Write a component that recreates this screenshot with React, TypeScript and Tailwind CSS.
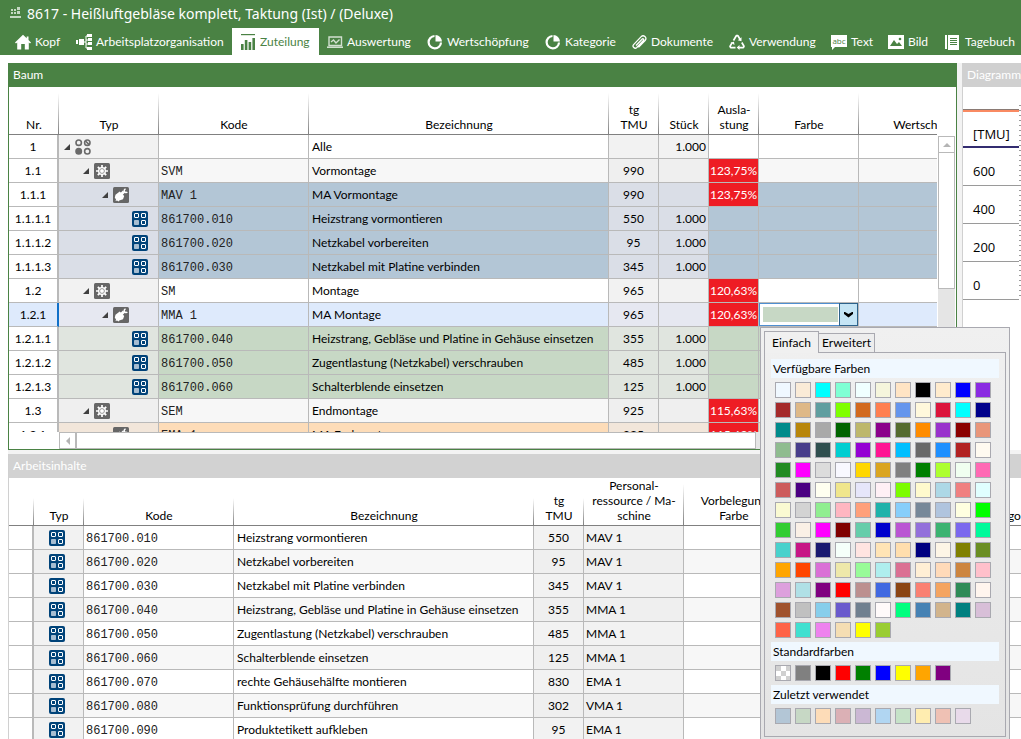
import React, { useState } from 'react';
import clsx from 'clsx';

interface TabItem {
  label: string;
  width: string;
  icon: React.ReactNode;
}

type NodeKind = 'root' | 'station' | 'worker' | 'task';
type Tone = 'plain' | 'alt' | 'blue' | 'green' | 'selected' | 'orange';

interface TreeRow {
  nr: string;
  kind: NodeKind;
  code: string;
  name: string;
  tmu?: string;
  pieces?: string;
  load?: string;
  tone: Tone;
}

interface WorkItem {
  code: string;
  name: string;
  tmu: string;
  resource: string;
}

/* ---------- Icons ---------- */

const TabIcon = ({ children }: { children: React.ReactNode }) => (
  <svg viewBox="0 0 16 16" className="w-4 h-4 shrink-0" fill="currentColor" aria-hidden="true">
    {children}
  </svg>
);

const PieIcon = () => (
  <TabIcon>
    <path d="M7.500 2A6.200 6.200 0 1 0 14 8.500" fill="none" stroke="currentColor" strokeWidth="2.200" />
    <path d="M8.500 1A6.800 6.800 0 0 1 15 7.500H8.500z" />
  </TabIcon>
);

const AppIcon = () => (
  <svg viewBox="0 0 11 12" className="w-[11px] h-3 shrink-0 -mt-1" fill="#c4d8c2" aria-hidden="true">
    <rect x="1" y="3" width="2" height="2" />
    <rect x="4" y="3" width="2" height="2" />
    <rect x="7" y="1" width="3" height="3" />
    <rect x="1" y="6" width="2" height="2" />
    <rect x="4" y="6" width="2" height="2" />
    <rect x="7" y="5" width="3" height="3" />
    <rect x="0" y="10" width="11" height="2" />
  </svg>
);

const RootIcon = () => (
  <svg viewBox="0 0 16 16" className="w-4 h-4 shrink-0" fill="none" stroke="#6a6a6a" strokeWidth="1.6">
    <circle cx="3.7" cy="3.7" r="2.7" />
    <circle cx="12.3" cy="3.7" r="2.7" />
    <path d="M10.5 2l3.6 3.6" />
    <circle cx="3.7" cy="12.3" r="2.7" fill="#6a6a6a" />
    <circle cx="12.3" cy="12.3" r="2.7" />
  </svg>
);

const StationIcon = () => (
  <svg viewBox="0 0 16 16" className="w-4 h-4 shrink-0">
    <rect width="16" height="16" rx="1.5" fill="#666" />
    <g stroke="#fff" strokeWidth="1.7">
      <path d="M8 2v12M2 8h12M3.8 3.8l8.4 8.4M12.2 3.8l-8.4 8.4" />
    </g>
    <circle cx="8" cy="8" r="4" fill="#fff" />
    <circle cx="8" cy="8" r="2.4" fill="none" stroke="#8a8a8a" strokeWidth="0.9" />
  </svg>
);

const WorkerIcon = () => (
  <svg viewBox="0 0 16 16" className="w-4 h-4 shrink-0">
    <rect width="16" height="16" rx="1.5" fill="#666" />
    <path d="M1.800 10.800l.7-3 4.200-3.300 4.500 4.500-1.200 3.200-3.700 1.300-.8 1-1.400-.9-1.500.3.400-1.600z" fill="#fff" />
    <path d="M8 7.500l3-3" stroke="#fff" strokeWidth="3" />
    <path d="M12.600 1.900a1.800 1.800 0 1 0 1.700 3" fill="none" stroke="#fff" strokeWidth="1.500" />
  </svg>
);

const TaskIcon = () => (
  <svg viewBox="0 0 16 16" className="w-4 h-4 shrink-0">
    <rect width="16" height="16" rx="2" fill="#004379" />
    <g fill="none" stroke="#fff" strokeWidth="1">
      <rect x="2.5" y="2.5" width="4" height="4" rx="0.5" />
      <rect x="9.5" y="2.5" width="4" height="4" rx="0.5" />
      <rect x="9.5" y="9.5" width="4" height="4" rx="0.5" />
    </g>
    <rect x="2" y="9" width="5" height="5" rx="0.8" fill="#a6bdd1" />
  </svg>
);

const nodeIcons: Record<NodeKind, React.ReactNode> = {
  root: <RootIcon />,
  station: <StationIcon />,
  worker: <WorkerIcon />,
  task: <TaskIcon />
};

/* ---------- Data ---------- */

const tabs: TabItem[] = [
  {
    label: 'Kopf',
    width: 'w-[61px]',
    icon: (
      <TabIcon>
        <path d="M8 .8L0 8.4l1 1.1 1.2-1V15.5h4V10h3.6v5.5h4V8.5l1.2 1 1-1.1-2.5-2.4V2.5h-1.8v1.8z" />
      </TabIcon>
    )
  },
  {
    label: 'Arbeitsplatzorganisation',
    width: 'w-[164px]',
    icon: (
      <TabIcon>
        <rect x="0" y="6" width="2" height="4" />
        <rect x="3" y="5" width="5" height="6" />
        <path d="M8 8h2M12 2h-2v12h2M10 6h2M10 10h2" fill="none" stroke="currentColor" />
        <rect x="11" y="0" width="5" height="3" />
        <rect x="12" y="4" width="4" height="3" />
        <rect x="12" y="8" width="4" height="3" />
        <rect x="11" y="13" width="5" height="3" />
      </TabIcon>
    )
  },
  {
    label: 'Zuteilung',
    width: 'w-[87px]',
    icon: (
      <TabIcon>
        <rect x="1" y="0" width="14" height="1.2" />
        <rect x="1" y="10" width="2.6" height="6" />
        <rect x="4.8" y="6" width="2.6" height="10" />
        <rect x="8.6" y="8" width="2.6" height="8" />
        <rect x="12.4" y="4" width="2.6" height="12" />
      </TabIcon>
    )
  },
  {
    label: 'Auswertung',
    width: 'w-[100px]',
    icon: (
      <TabIcon>
        <g fill="none" stroke="currentColor" opacity="0.75">
          <path d="M2 11.500V3h12.500v8.500z" strokeWidth="1.400" />
          <path d="M4 8l2.500-2 2.500 3 3.500-3.500" strokeWidth="1.400" />
          <path d="M0 13.200h16" strokeWidth="1.600" />
        </g>
      </TabIcon>
    )
  },
  { label: 'Wertschöpfung', width: 'w-[118px]', icon: <PieIcon /> },
  { label: 'Kategorie', width: 'w-[86px]', icon: <PieIcon /> },
  {
    label: 'Dokumente',
    width: 'w-[98px]',
    icon: (
      <TabIcon>
        <path
          d="M5 11.500l6-6.300c1-1 2.300.2 1.400 1.300l-6.600 7c-2 2-5-.8-3.200-2.900l7.600-8c2.300-2.300 6.300 1 3.900 3.900l-6.600 6.900"
          fill="none"
          stroke="currentColor"
          strokeWidth="1.3"
        />
      </TabIcon>
    )
  },
  {
    label: 'Verwendung',
    width: 'w-[102px]',
    icon: (
      <TabIcon>
        <g fill="none" stroke="currentColor" strokeWidth="1.700" strokeLinejoin="round">
          <path d="M4.500 6.500L7.300 1.700h1.600l2.300 3.800" />
          <path d="M12.800 8.500l2.200 3.800-.7 1.400H9.500" />
          <path d="M6.500 13.700H1.700L1 12.300l2-3.500" />
        </g>
        <path d="M12.500 3.300v4l-3.800-1zM10.500 11v5l-2.800-2.500zM1.500 8.500l3.500-.8.500 3.300z" />
      </TabIcon>
    )
  },
  {
    label: 'Text',
    width: 'w-[57px]',
    icon: (
      <TabIcon>
        <path d="M0 1h16v12H4l-3 3v-3H0z" />
        <text x="8" y="9.500" fontSize="8" textAnchor="middle" fill="#4a8244" fontFamily="Open Sans, sans-serif">
          abc
        </text>
      </TabIcon>
    )
  },
  {
    label: 'Bild',
    width: 'w-[57px]',
    icon: (
      <TabIcon>
        <path d="M0 1h16v14H0z" />
        <path d="M2 12l4-6 3 4 2-2 3 4z" fill="#4a8244" />
        <circle cx="12" cy="5" r="1.300" fill="#4a8244" />
      </TabIcon>
    )
  },
  {
    label: 'Tagebuch',
    width: 'w-[80px]',
    icon: (
      <TabIcon>
        <path d="M0 1h2v14H0zM3 1h11v15H3z" />
        <path d="M5 4.500h7M5 6.500h7M5 8.500h7M5 10.500h7" stroke="#4a8244" />
      </TabIcon>
    )
  }
];

const treeRows: TreeRow[] = [
  { nr: '1', kind: 'root', code: '', name: 'Alle', pieces: '1.000', tone: 'plain' },
  { nr: '1.1', kind: 'station', code: 'SVM', name: 'Vormontage', tmu: '990', load: '123,75%', tone: 'alt' },
  { nr: '1.1.1', kind: 'worker', code: 'MAV 1', name: 'MA Vormontage', tmu: '990', load: '123,75%', tone: 'blue' },
  { nr: '1.1.1.1', kind: 'task', code: '861700.010', name: 'Heizstrang vormontieren', tmu: '550', pieces: '1.000', tone: 'blue' },
  { nr: '1.1.1.2', kind: 'task', code: '861700.020', name: 'Netzkabel vorbereiten', tmu: '95', pieces: '1.000', tone: 'blue' },
  { nr: '1.1.1.3', kind: 'task', code: '861700.030', name: 'Netzkabel mit Platine verbinden', tmu: '345', pieces: '1.000', tone: 'blue' },
  { nr: '1.2', kind: 'station', code: 'SM', name: 'Montage', tmu: '965', load: '120,63%', tone: 'plain' },
  { nr: '1.2.1', kind: 'worker', code: 'MMA 1', name: 'MA Montage', tmu: '965', load: '120,63%', tone: 'selected' },
  { nr: '1.2.1.1', kind: 'task', code: '861700.040', name: 'Heizstrang, Gebläse und Platine in Gehäuse einsetzen', tmu: '355', pieces: '1.000', tone: 'green' },
  { nr: '1.2.1.2', kind: 'task', code: '861700.050', name: 'Zugentlastung (Netzkabel) verschrauben', tmu: '485', pieces: '1.000', tone: 'green' },
  { nr: '1.2.1.3', kind: 'task', code: '861700.060', name: 'Schalterblende einsetzen', tmu: '125', pieces: '1.000', tone: 'green' },
  { nr: '1.3', kind: 'station', code: 'SEM', name: 'Endmontage', tmu: '925', load: '115,63%', tone: 'alt' },
  { nr: '1.3.1', kind: 'worker', code: 'EMA 1', name: 'MA Endmontage', tmu: '925', load: '115,63%', tone: 'orange' }
];

const workItems: WorkItem[] = [
  { code: '861700.010', name: 'Heizstrang vormontieren', tmu: '550', resource: 'MAV 1' },
  { code: '861700.020', name: 'Netzkabel vorbereiten', tmu: '95', resource: 'MAV 1' },
  { code: '861700.030', name: 'Netzkabel mit Platine verbinden', tmu: '345', resource: 'MAV 1' },
  { code: '861700.040', name: 'Heizstrang, Gebläse und Platine in Gehäuse einsetzen', tmu: '355', resource: 'MMA 1' },
  { code: '861700.050', name: 'Zugentlastung (Netzkabel) verschrauben', tmu: '485', resource: 'MMA 1' },
  { code: '861700.060', name: 'Schalterblende einsetzen', tmu: '125', resource: 'MMA 1' },
  { code: '861700.070', name: 'rechte Gehäusehälfte montieren', tmu: '830', resource: 'EMA 1' },
  { code: '861700.080', name: 'Funktionsprüfung durchführen', tmu: '302', resource: 'VMA 1' },
  { code: '861700.090', name: 'Produktetikett aufkleben', tmu: '95', resource: 'EMA 1' }
];

const availableColors = (
  'aliceblue antiquewhite aqua aquamarine azure beige bisque black blanchedalmond blue blueviolet ' +
  'brown burlywood cadetblue chartreuse chocolate coral cornflowerblue cornsilk crimson cyan darkblue ' +
  'darkcyan darkgoldenrod darkgray darkgreen darkkhaki darkmagenta darkolivegreen darkorange darkorchid darkred darksalmon ' +
  'darkseagreen darkslateblue darkslategray darkturquoise darkviolet deeppink deepskyblue dimgray dodgerblue firebrick floralwhite ' +
  'forestgreen fuchsia gainsboro ghostwhite gold goldenrod gray green greenyellow honeydew hotpink ' +
  'indianred indigo ivory khaki lavender lavenderblush lawngreen lemonchiffon lightblue lightcoral lightcyan ' +
  'lightgoldenrodyellow lightgray lightgreen lightpink lightsalmon lightseagreen lightskyblue lightslategray lightsteelblue lightyellow lime ' +
  'limegreen linen magenta maroon mediumaquamarine mediumblue mediumorchid mediumpurple mediumseagreen mediumslateblue mediumspringgreen ' +
  'mediumturquoise mediumvioletred midnightblue mintcream mistyrose moccasin navajowhite navy oldlace olive olivedrab ' +
  'orange orangered orchid palegoldenrod palegreen paleturquoise palevioletred papayawhip peachpuff peru pink ' +
  'plum powderblue purple red rosybrown royalblue saddlebrown salmon sandybrown seagreen seashell ' +
  'sienna silver skyblue slateblue slategray snow springgreen steelblue tan teal thistle ' +
  'tomato turquoise violet wheat yellow yellowgreen'
).split(' ');

const standardColors = ['transparent', 'gray', 'black', 'red', 'green', 'blue', 'yellow', 'orange', 'purple'];

const recentColors = [
  '#b3c6d6', '#c7d8c5', '#fddcb8', '#dbb0b5', '#cbb8d4',
  '#b1d6f2', '#c6e2c8', '#ffedb0', '#efc1b4', '#e8daea'
];

/* ---------- Row styling ---------- */

const toneClass: Record<Tone, string> = {
  plain: 'bg-white',
  alt: 'bg-[#f7f7f7]',
  blue: 'bg-[#b3c6d6]',
  green: 'bg-[#c7d8c5]',
  selected: 'bg-[#deeafc]',
  orange: 'bg-[#fddcb8]'
};

// read-only columns use a paler version of the row colour
const readonlyClass: Record<Tone, string> = {
  plain: 'bg-[#f2f2f2]',
  alt: 'bg-[#efefef]',
  blue: 'bg-[#dadee7]',
  green: 'bg-[#e0e5df]',
  selected: 'bg-[#e6e8f1]',
  orange: 'bg-[#f2e6da]'
};

const indentClass: Record<NodeKind, string> = {
  root: 'pl-1',
  station: 'pl-[23px]',
  worker: 'pl-[42px]',
  task: 'pl-[73px]'
};

const cell = 'h-6 p-0 border-r border-b border-[#b9b9b9] whitespace-nowrap overflow-hidden';

/* ---------- Shared pieces ---------- */

const HeadCell = ({ children, low = false, last = false }: { children?: React.ReactNode; low?: boolean; last?: boolean }) => (
  <th
    scope="col"
    className={clsx(
      'h-12 p-0 pb-[2px] align-bottom font-normal text-center leading-[15px] border-b border-[#808080]',
      'bg-no-repeat bg-right bg-[length:1px_100%]',
      !last && (low
        ? 'bg-[linear-gradient(to_bottom,transparent_20px,#808080)]'
        : 'bg-[linear-gradient(to_bottom,transparent_6px,#808080)]')
    )}
  >
    {children}
  </th>
);

const Expander = () => (
  <svg viewBox="0 0 8 8" className="w-2 h-2 mr-1 shrink-0" aria-hidden="true">
    <path d="M7 1v6H1z" fill="#404040" />
  </svg>
);

const Arrow = ({ d }: { d: string }) => (
  <svg viewBox="0 0 8 8" className="w-2 h-2" fill="#b4b4b4" aria-hidden="true">
    <path d={d} />
  </svg>
);

/* ---------- Colour popup ---------- */

const Swatches = ({ colors, onPick }: { colors: string[]; onPick: (color: string) => void }) => (
  <div className="grid grid-cols-[repeat(11,16px)] gap-1 px-1 py-1">
    {colors.map((color) => (
      <button
        key={color}
        type="button"
        aria-label={color}
        title={color}
        onClick={() => onPick(color)}
        className={clsx(
          'w-4 h-4 border border-[#a9a9b0]',
          color === 'transparent' && 'bg-[repeating-conic-gradient(#fff_0_25%,#d0d0d0_0_50%)] bg-[length:10px_10px]'
        )}
        style={color === 'transparent' ? undefined : { backgroundColor: color }}
      />
    ))}
  </div>
);

const ColorPopup = ({ onPick }: { onPick: (color: string) => void }) => {
  const [tab, setTab] = useState<'simple' | 'advanced'>('simple');
  const sectionTitle = 'h-[19px] leading-[19px] px-[2px] bg-[#f0f8ff]';

  return (
    <div className="absolute left-[760px] top-[327px] z-20 w-[250px] p-[3px] border border-[#a9a9b0] bg-linear-to-b from-[#f0f0f0] to-[#e4e4e4]">
      <div role="tablist" className="flex items-end">
        <button
          type="button"
          role="tab"
          aria-selected={tab === 'simple'}
          onClick={() => setTab('simple')}
          className="relative z-10 -mb-px w-[55px] h-[22px] border border-b-0 border-[#a9a9b0] bg-[#f0f0f0]"
        >
          Einfach
        </button>
        <button
          type="button"
          role="tab"
          aria-selected={tab === 'advanced'}
          onClick={() => setTab('advanced')}
          className="w-[56px] h-[19px] border border-l-0 border-b-0 border-[#a9a9b0] bg-[#ededed]"
        >
          Erweitert
        </button>
      </div>
      <div role="tabpanel" className="border border-[#a9a9b0] px-[6px] pt-[6px] pb-2">
        <div className={sectionTitle}>Verfügbare Farben</div>
        <Swatches colors={availableColors} onPick={onPick} />
        <div className={sectionTitle}>Standardfarben</div>
        <Swatches colors={standardColors} onPick={onPick} />
        <div className={sectionTitle}>Zuletzt verwendet</div>
        <Swatches colors={recentColors} onPick={onPick} />
      </div>
    </div>
  );
};

/* ---------- Panels ---------- */

interface TreePanelProps {
  color: string;
  onToggle: () => void;
  open: boolean;
}

const TreePanel = ({ color, onToggle, open }: TreePanelProps) => (
  <section className="flex-1 min-w-0 border border-t-0 border-[#4a8244] bg-white">
    <h2 className="-mx-px h-6 leading-6 px-[5px] bg-[#4a8244] text-white">Baum</h2>
    <div className="flex">
      <div className="flex-1 min-w-0 h-[345px] overflow-hidden">
        <table className="table-fixed w-[1000px] border-separate border-spacing-0">
          <colgroup>
            <col className="w-[50px]" />
            <col className="w-[100px]" />
            <col className="w-[150px]" />
            <col className="w-[300px]" />
            <col className="w-[50px]" />
            <col className="w-[50px]" />
            <col className="w-[50px]" />
            <col className="w-[100px]" />
            <col className="w-[150px]" />
          </colgroup>
          <thead>
            <tr>
              <HeadCell>Nr.</HeadCell>
              <HeadCell>Typ</HeadCell>
              <HeadCell>Kode</HeadCell>
              <HeadCell>Bezeichnung</HeadCell>
              <HeadCell>tg<br />TMU</HeadCell>
              <HeadCell>Stück</HeadCell>
              <HeadCell>Ausla-<br />stung</HeadCell>
              <HeadCell>Farbe</HeadCell>
              <HeadCell last>Wertschöpfung</HeadCell>
            </tr>
          </thead>
          <tbody>
            {treeRows.map((row) => {
              const selected = row.tone === 'selected';
              const tone = toneClass[row.tone];
              const pale = readonlyClass[row.tone];
              return (
                <tr key={row.nr}>
                  <td
                    className={clsx(
                      cell,
                      'text-center border-r-2',
                      selected ? 'bg-[#deeafc] border-r-[#1070c8]' : 'bg-white'
                    )}
                  >
                    {row.nr}
                  </td>
                  <td className={clsx(cell, pale)}>
                    <div className={clsx('flex items-center', indentClass[row.kind])}>
                      {row.kind !== 'task' && <Expander />}
                      {nodeIcons[row.kind]}
                    </div>
                  </td>
                  <td className={clsx(cell, tone, 'pl-[2px] pt-[2px] font-[Liberation_Mono,monospace] text-[#222]')}>{row.code}</td>
                  <td className={clsx(cell, tone, 'pl-[3px]')}>{row.name}</td>
                  <td className={clsx(cell, pale, 'text-center')}>{row.tmu}</td>
                  <td className={clsx(cell, pale, 'text-right pr-[2px]')}>{row.pieces}</td>
                  <td className={clsx(cell, 'text-center', row.load ? 'bg-[#ee1c24] text-white' : tone)}>{row.load}</td>
                  <td className={clsx(cell, tone)}>
                    {selected && (
                      <div className="flex h-[23px] border border-[#4f8fd0] bg-white">
                        <div className="flex-1 p-[3px] pr-[2px]">
                          <div className="h-[15px]" style={{ backgroundColor: color }} />
                        </div>
                        <button
                          type="button"
                          aria-label="Farbe wählen"
                          aria-haspopup="dialog"
                          aria-expanded={open}
                          onClick={onToggle}
                          className="-m-px w-[19px] flex items-center justify-center border border-[#2c628b] bg-[#c5e5f5]"
                        >
                          <svg viewBox="0 0 9 6" className="w-[9px] h-[6px]">
                            <path d="M0 0h1l3.500 2L8 0h1v2L4.500 5.500 0 2z" />
                          </svg>
                        </button>
                      </div>
                    )}
                  </td>
                  <td className={clsx(cell, tone)} />
                </tr>
              );
            })}
          </tbody>
        </table>
      </div>
      {/* vertical scrollbar */}
      <div className="w-[19px] shrink-0 px-px pt-[49px] flex flex-col">
        <div className="h-[17px] border border-[#b9b9b9] bg-white flex items-center justify-center">
          <Arrow d="M4 2l4 4H0z" />
        </div>
        <div className="h-[136px] border border-t-0 border-[#b9b9b9] bg-white" />
        <div className="flex-1 bg-[#e5e5e5]" />
      </div>
    </div>
    {/* horizontal scrollbar */}
    <div className="flex h-[17px] pl-[50px] pr-[19px]">
      <div className="w-[17px] border border-[#b9b9b9] bg-white flex items-center justify-center">
        <Arrow d="M6 0v8L2 4z" />
      </div>
      <div className="w-[680px] border border-[#b9b9b9] bg-white" />
      <div className="flex-1 bg-[#e5e5e5]" />
    </div>
  </section>
);

const DiagramPanel = () => (
  <section className="w-[59px] shrink-0 bg-white border-l border-[#d0d0d0] overflow-hidden">
    <h2 className="h-6 leading-6 pl-1 bg-[#d0d0d0] text-white">Diagramm</h2>
    <div className="pt-[22px] flex text-[13px] font-['Open_Sans',sans-serif]">
      <div className="flex-1">
        <div className="border-t border-[#8a7a74]">
          <div className="h-[38px] pl-[10px] border-t-2 border-t-[#f98a62] border-b-2 border-b-[#332c70] leading-[44px]">[TMU]</div>
        </div>
        {['600', '400', '200', '0'].map((value) => (
          <div key={value} className="h-[38px] pt-[9px] pl-[10px] border-b border-[#9a9a9a] leading-7">
            {value}
          </div>
        ))}
      </div>
      <div className="w-[2px] -mt-1 bg-[repeating-linear-gradient(to_bottom,#9a9a9a_0_1px,transparent_1px_5px)]" />
    </div>
  </section>
);

const WorkPanel = () => (
  <section className="flex-1 min-h-0 ml-2 border-l border-[#d0d0d0] overflow-hidden">
    <h2 className="h-6 leading-6 pl-1 bg-[#d2d2d2] text-white">Arbeitsinhalte</h2>
    <table className="table-fixed w-[1075px] border-separate border-spacing-0">
      <colgroup>
        <col className="w-[25px]" />
        <col className="w-[50px]" />
        <col className="w-[150px]" />
        <col className="w-[300px]" />
        <col className="w-[50px]" />
        <col className="w-[100px]" />
        <col className="w-[100px]" />
        <col className="w-[150px]" />
        <col className="w-[150px]" />
      </colgroup>
      <thead>
        <tr>
          <HeadCell low />
          <HeadCell low>Typ</HeadCell>
          <HeadCell low>Kode</HeadCell>
          <HeadCell low>Bezeichnung</HeadCell>
          <HeadCell low>tg<br />TMU</HeadCell>
          <HeadCell>Personal-<br />ressource / Ma-<br />schine</HeadCell>
          <HeadCell>Vorbelegung<br />Farbe</HeadCell>
          <HeadCell low>Wertschöpfung</HeadCell>
          <HeadCell low>Kategorie</HeadCell>
        </tr>
      </thead>
      <tbody>
        {workItems.map((item, i) => {
          const tone = i % 2 ? toneClass.alt : toneClass.plain;
          const pale = i % 2 ? readonlyClass.alt : readonlyClass.plain;
          return (
            <tr key={item.code}>
              <td className={clsx(cell, 'bg-white border-r-2')} />
              <td className={clsx(cell, pale)}>
                <div className="flex pl-[15px]">
                  <TaskIcon />
                </div>
              </td>
              <td className={clsx(cell, tone, 'pl-[2px] pt-[2px] font-[Liberation_Mono,monospace] text-[#222]')}>{item.code}</td>
              <td className={clsx(cell, tone, 'pl-[3px]')}>{item.name}</td>
              <td className={clsx(cell, pale, 'text-center')}>{item.tmu}</td>
              <td className={clsx(cell, pale, 'pl-[2px]')}>{item.resource}</td>
              <td className={clsx(cell, tone)} />
              <td className={clsx(cell, tone)} />
              <td className={clsx(cell, tone)} />
            </tr>
          );
        })}
      </tbody>
    </table>
  </section>
);

const App: React.FC = () => {
  const [activeTab, setActiveTab] = useState('Zuteilung');
  const [color, setColor] = useState('#c7d8c5');
  const [open, setOpen] = useState(true);

  return (
    <div className="relative h-screen overflow-hidden flex flex-col bg-white text-black text-xs font-[Lato,sans-serif]">
      <header className="bg-[#4a8244] text-white">
        <div className="flex items-center h-7 pl-[10px] gap-[6px]">
          <AppIcon />
          <h1 className="text-sm leading-6 whitespace-nowrap font-['Noto_Sans',sans-serif]">
            8617 - Heißluftgebläse komplett, Taktung (Ist) / (Deluxe)
          </h1>
        </div>
        <nav className="flex pl-[7px]">
          {tabs.map((tab) => (
            <button
              key={tab.label}
              type="button"
              onClick={() => setActiveTab(tab.label)}
              className={clsx(
                'flex items-center gap-1 h-[27px] pl-2 shrink-0 whitespace-nowrap',
                tab.width,
                activeTab === tab.label && 'bg-white text-[#4a8244]'
              )}
            >
              {tab.icon}
              {tab.label}
            </button>
          ))}
        </nav>
      </header>

      <main className="flex-1 min-h-0 flex flex-col pt-2">
        <div className="flex ml-2 gap-[5px] bg-[#f3f3f3] pb-1">
          <TreePanel color={color} open={open} onToggle={() => setOpen(!open)} />
          <DiagramPanel />
        </div>
        <WorkPanel />
      </main>

      {open && <ColorPopup onPick={setColor} />}
    </div>
  );
};

export default App;
